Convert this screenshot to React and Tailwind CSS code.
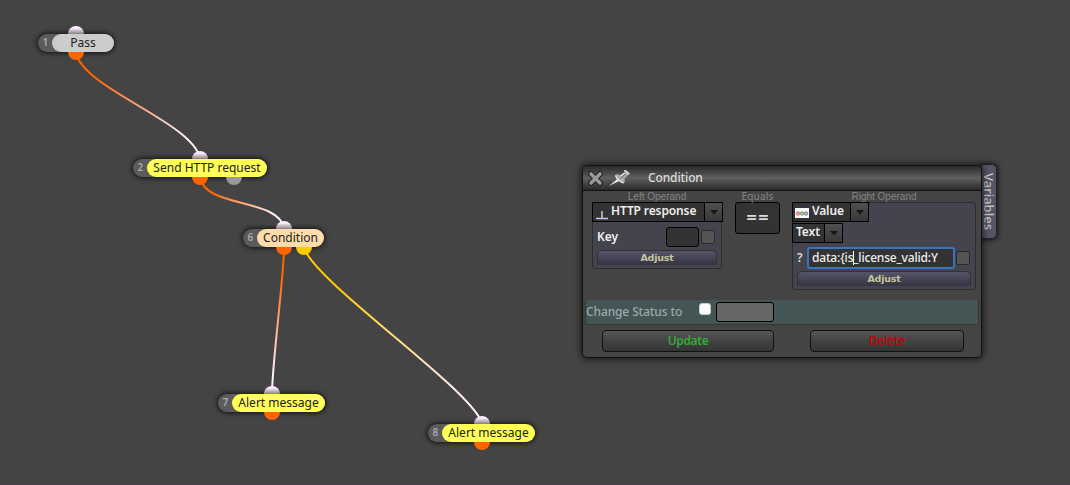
import React from 'react';

const nodes = [
  { id: 1, label: 'Pass', left: 38, top: 34, width: 'w-[76px]', tint: 'bg-[#cccccc]', inX: 76, outs: [{ x: 76, fill: '#ff6600' }] },
  { id: 2, label: 'Send HTTP request', left: 133, top: 159, width: 'w-[134px]', tint: 'bg-[#ffff55]', inX: 200, outs: [{ x: 200, fill: '#ff6600' }, { x: 234, fill: '#999999' }] },
  { id: 6, label: 'Condition', left: 243, top: 229, width: 'w-[81px]', tint: 'bg-[#ffddaa]', inX: 284, outs: [{ x: 284, fill: '#ff6600' }, { x: 304, fill: '#ffcc00' }] },
  { id: 7, label: 'Alert message', left: 218, top: 394, width: 'w-[107px]', tint: 'bg-[#ffff55]', inX: 272, outs: [{ x: 272, fill: '#ff6600' }] },
  { id: 8, label: 'Alert message', left: 428, top: 424, width: 'w-[107px]', tint: 'bg-[#ffff55]', inX: 482, outs: [{ x: 482, fill: '#ff6600' }] },
];

const wires = [
  { x1: 76, y1: 53, x2: 200, y2: 158, from: '#ff6600', d: 'M76 53C84 89 192 122 200 158' },
  { x1: 200, y1: 178, x2: 284, y2: 228, from: '#ff6600', d: 'M200 178C206 208 278 198 284 228' },
  { x1: 284, y1: 248, x2: 272, y2: 393, from: '#ff6600', d: 'M284 248C284 275 272 366 272 393' },
  { x1: 304, y1: 248, x2: 482, y2: 423, from: '#ffcc00', d: 'M304 248C316 283 470 388 482 423' },
];

function Wires() {
  return (
    <svg className="absolute inset-0" width="1070" height="485" fill="none">
      <defs>
        {wires.map((w, i) => (
          <linearGradient key={i} id={`wire${i}`} gradientUnits="userSpaceOnUse" x1={w.x1} y1={w.y1} x2={w.x2} y2={w.y2}>
            <stop offset="0.2" stopColor={w.from} />
            <stop offset="0.85" stopColor="#ffeeff" />
          </linearGradient>
        ))}
      </defs>
      {wires.map((w, i) => (
        <path key={i} d={w.d} stroke={`url(#wire${i})`} strokeWidth="2" />
      ))}
    </svg>
  );
}

function Sockets() {
  return (
    <svg className="absolute inset-0" width="1070" height="485">
      <defs>
        <linearGradient id="socket" x1="0" y1="0" x2="0" y2="1">
          <stop offset="0.25" stopColor="#ffeeff" />
          <stop offset="1" stopColor="#857d85" />
        </linearGradient>
      </defs>
      {nodes.map((n) => (
        <g key={n.id}>
          <path d={`M${n.inX - 8} ${n.top}a8 8 0 0 1 16 0z`} fill="url(#socket)" />
          {n.outs.map((o) => (
            <path key={o.x} d={`M${o.x - 8} ${n.top + 18}a8 8 0 0 0 16 0z`} fill={o.fill} />
          ))}
        </g>
      ))}
    </svg>
  );
}

function Node({ node }) {
  return (
    <div
      style={{ left: node.left, top: node.top }}
      className={`absolute flex h-[18px] rounded-full bg-[#5b5b5b] shadow-[0_0_5px_1px_rgba(0,0,0,0.75)] ${node.width}`}
    >
      <span className="w-[14px] pl-[4.5px] text-[10px] font-semibold leading-[17px] text-[#aaaaaa]">{node.id}</span>
      <span className={`flex-1 whitespace-nowrap rounded-full text-center text-[12px] leading-[18px] text-[#222222] ${node.tint}`}>
        {node.label}
      </span>
    </div>
  );
}

function Select({ children, className, arrow }) {
  return (
    <div className={`flex h-5 border border-black bg-[#333333] text-[12px] font-semibold leading-[16px] tracking-[-0.01em] text-[#eeeeee] ${className}`}>
      <div className="flex flex-1 items-center whitespace-nowrap pb-0.5">{children}</div>
      <div className={`flex items-center justify-center border-l border-black bg-linear-to-b from-[#505050] to-[#383838] ${arrow}`}>
        <svg width="8" height="5"><path d="M0 0h8L4 4.5z" fill="#171717" /></svg>
      </div>
    </div>
  );
}

function Adjust() {
  return (
    <div className="h-[15px] rounded-t-[5px] border border-b-0 border-[#33332d] bg-linear-to-b from-[#555568] to-[#343443] text-center font-['DejaVu_Sans'] text-[9.5px] font-bold leading-[13px] tracking-[-0.02em] text-[#c4c49b]">
      Adjust
    </div>
  );
}

function CloseIcon() {
  return (
    <svg width="15" height="15" viewBox="0 0 15 15">
      <path d="M3 3l9 9M12 3l-9 9" stroke="#1c1c1c" strokeWidth="5.6" strokeLinecap="round" />
      <path d="M3 3l9 9M12 3l-9 9" stroke="#9a9a9a" strokeWidth="3.6" strokeLinecap="round" />
    </svg>
  );
}

function PinIcon() {
  return (
    <svg width="24" height="18" viewBox="0 0 24 18">
      <path d="M1 17L10 9.5l2 2z" fill="#eee" />
      <path d="M7 6q3-1.500 5 .5l4.500-3L16 1q3-.5 6 4l-1.500.5-4 4q1 3-.5 5-2.500-1-4.500-3Q8 10 7 6z" fill="#a8abad" />
      <path d="M7.500 6.500q1 3 3.500 5t4.500 2.500M12.500 7l4-3M16.500 1.500q3 1 4.500 4" stroke="#e4e6e8" strokeWidth="1.200" fill="none" />
      <path d="M13 9l4-3.500" stroke="#666" strokeWidth="1" />
    </svg>
  );
}

function ValueIcon() {
  return (
    <svg width="14" height="12" viewBox="0 0 14 12">
      <path d="M0 0h14v12H0z" fill="#f8f8f8" />
      <path d="M0 0h14v2H0z" fill="#334" />
      <circle cx="3" cy="7.500" r="1.700" fill="#f0b0a8" stroke="#c55" strokeWidth="0.800" />
      <circle cx="7" cy="7.500" r="1.700" fill="#b8ccb4" stroke="#686" strokeWidth="0.800" />
      <circle cx="11" cy="7.500" r="1.700" fill="#b4c4dd" stroke="#568" strokeWidth="0.800" />
    </svg>
  );
}

function ConditionPanel() {
  return (
    <div className="absolute left-[582px] top-[165px] flex h-[193px] w-[400px] flex-col rounded-[5px] border border-[#111111] bg-[#444444] shadow-[0_0_7px_1px_rgba(0,0,0,0.7)]">
      <div className="flex h-[25px] shrink-0 items-center rounded-t-[4px] border-b border-[#111111] bg-linear-to-b from-[#292929] via-[#606060] to-[#292929] pl-[5px]">
        <CloseIcon />
        <div className="-mt-px ml-[5px]"><PinIcon /></div>
        <span className="ml-4 text-[12px] font-medium leading-6 tracking-[-0.01em] text-[#dddddd]">Condition</span>
      </div>

      <div className="flex h-[108px] shrink-0 pl-[9px]">
        <div className="w-[130px]">
          <div className="h-[11px] text-center font-['Liberation_Sans'] text-[10px] leading-[12px] text-[#858585]">Left Operand</div>
          <div className="h-[67px] w-[130px] rounded-[3px] border border-[#2b2b30] bg-[#44444f]">
            <Select className="-ml-px -mt-px w-[131px]" arrow="w-[18px]">
              <svg className="ml-[3px] mr-[3px] mt-2" width="12" height="9"><path d="M0 7.500h12M6 0v7" stroke="#cbc5ee" strokeWidth="1.500" /></svg>
              HTTP response
            </Select>
            <div className="flex h-[28px] items-center pl-1 pt-0.5">
              <span className="w-[69px] text-[12px] font-semibold text-[#eeeeee]">Key</span>
              <div className="h-5 w-[33px] rounded-[3px] border border-black bg-[#333333]" />
              <div className="ml-0.5 h-[14px] w-[14px] rounded-[2px] border border-[#292929] bg-[#555555]" />
            </div>
            <div className="px-1"><Adjust /></div>
          </div>
        </div>

        <div className="ml-[13px] w-[45px]">
          <div className="h-[11px] text-center text-[10px] leading-[11px] tracking-[0.02em] text-[#858585]">Equals</div>
          <div className="h-8 rounded-[3px] border border-black bg-[#333333] text-center font-['DejaVu_Sans'] text-[14px] font-bold leading-[29px] text-[#dddddd]">==</div>
        </div>

        <div className="ml-3 w-[184px]">
          <div className="h-[11px] text-center font-['Liberation_Sans'] text-[10px] leading-[12px] text-[#858585]">Right Operand</div>
          <div className="h-[88px] rounded-[3px] border border-[#2b2b30] bg-[#44444f]">
            <Select className="-ml-px -mt-px w-[77px]" arrow="w-[18px]">
              <div className="ml-0.5 mr-[3px] mt-0.5"><ValueIcon /></div>
              Value
            </Select>
            <Select className="-ml-px mt-px w-[51px]" arrow="w-[18px]">
              <span className="ml-[3px]">Text</span>
            </Select>
            <div className="flex h-[28px] items-center pl-1 pt-0.5">
              <span className="w-[10px] text-[12px] font-semibold text-[#dddddd]">?</span>
              <div className="flex h-[22px] w-[148px] items-center whitespace-nowrap rounded-[3px] border-2 border-[#3875bd] bg-[#333333] pl-[3px] text-[12px] font-medium tracking-[-0.015em] text-[#eeeeee]">
                data:{'{'}is<span className="-mr-px h-[14px] w-px bg-white" />_license_valid:Y
              </div>
              <div className="ml-px h-[14px] w-[14px] rounded-[2px] border border-[#292929] bg-[#555555]" />
            </div>
            <div className="px-1"><Adjust /></div>
          </div>
        </div>
      </div>

      <div className="ml-0.5 mr-0.5 mt-px flex h-[25px] items-center border border-t-0 border-[#37372a] bg-[#445555] text-[12px] font-medium tracking-[-0.01em] text-[#99aaaa]">
        <span className="w-[113px]">Change Status to</span>
        <div className="-mt-1.5 h-3 w-3 rounded-[3px] border border-[#cccccc] bg-white" />
        <div className="ml-[5px] h-5 w-[58px] rounded-[3px] border border-black bg-[#666666]" />
      </div>

      <div className="mt-[5px] flex justify-between pl-[19px] pr-[17px] text-[12px]">
        <button className="h-[22px] w-[172px] rounded-[4px] border border-[#111111] bg-linear-to-b from-[#555555] to-[#333333] font-semibold leading-5 tracking-[-0.03em] text-[#33aa33]">Update</button>
        <button className="h-[22px] w-[154px] rounded-[4px] border border-[#111111] bg-linear-to-b from-[#555555] to-[#333333] font-medium leading-5 tracking-[-0.01em] text-[#cc0000]">Delete</button>
      </div>
    </div>
  );
}

export default function App() {
  return (
    <div className="relative h-[485px] w-[1070px] overflow-hidden border-b border-[#484048] bg-[#444444] font-['Noto_Sans',sans-serif]">
      <Wires />
      {nodes.map((node) => (
        <Node key={node.id} node={node} />
      ))}
      <Sockets />
      <div className="absolute left-[981px] top-[164px] flex h-[75px] w-4 items-center rounded-r-[5px] border border-[#22222a] bg-[#555566] pt-2 text-[13px] font-medium leading-[14px] text-[#c4c4c4] shadow-[0_0_5px_1px_rgba(0,0,0,0.7)] [writing-mode:vertical-rl]">
        Variables
      </div>
      <ConditionPanel />
    </div>
  );
}
